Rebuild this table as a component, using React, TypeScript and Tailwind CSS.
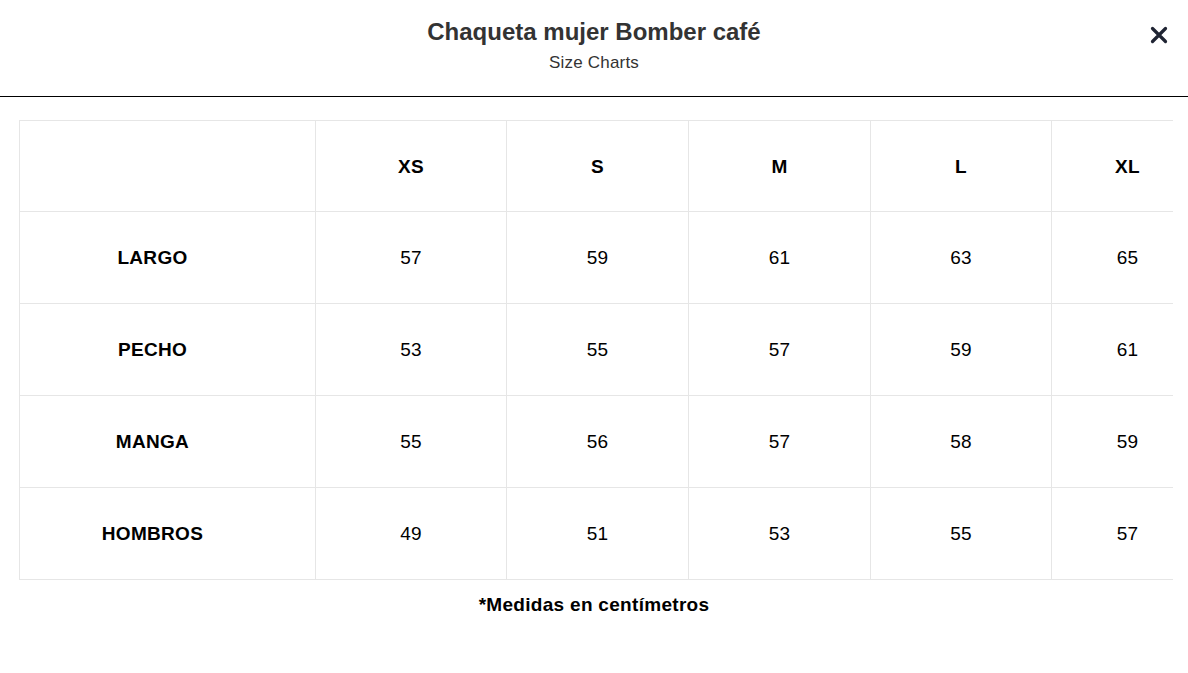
const sizes = ["XS", "S", "M", "L", "XL"]

const rows = [
  { label: "LARGO", values: [57, 59, 61, 63, 65] },
  { label: "PECHO", values: [53, 55, 57, 59, 61] },
  { label: "MANGA", values: [55, 56, 57, 58, 59] },
  { label: "HOMBROS", values: [49, 51, 53, 55, 57] },
]

const colWidths = ["w-[191px]", "w-[182px]", "w-[182px]", "w-[181px]", "w-[152px]"]

export default function App() {
  return (
    <div className="min-h-screen bg-white font-['Liberation_Sans',Arial,sans-serif]">
      {/* Header */}
      <div className="relative h-[97px] border-b border-black flex flex-col items-center pt-[17px]">
        <h1 className="text-[24px] leading-[30px] font-bold text-[#333]">Chaqueta mujer Bomber café</h1>
        <p className="text-[17px] leading-5 text-[#333] mt-[6px] tracking-[0.2px]">Size Charts</p>
        <button className="absolute right-[16px] top-[22px] text-[#1f2433]">
          <svg width="26" height="26" viewBox="0 0 24 24" fill="none" stroke="currentColor" strokeWidth="3" strokeLinecap="round">
            <path d="M6 6l12 12M18 6L6 18" />
          </svg>
        </button>
      </div>

      {/* Table */}
      <div className="ml-[19px] mt-[23px] w-[1154px] overflow-hidden">
        <table className="table-fixed w-[1184px] border-collapse text-[19px] text-black tracking-[0.3px]">
          <thead>
            <tr className="h-[91px]">
              <th className="w-[296px] border border-[#e6e6e6]"></th>
              {sizes.map((s, i) => (
                <th key={s} className={`${colWidths[i]} border border-[#e6e6e6] font-bold pt-[3px]`}>
                  {s}
                </th>
              ))}
            </tr>
          </thead>
          <tbody>
            {rows.map((r) => (
              <tr key={r.label} className="h-[92px]">
                <td className="border border-[#e6e6e6] font-bold text-center pr-[30px] pt-[1px]">{r.label}</td>
                {r.values.map((v, i) => (
                  <td key={i} className="border border-[#e6e6e6] text-center pt-[1px]">
                    {v}
                  </td>
                ))}
              </tr>
            ))}
          </tbody>
        </table>
      </div>

      <p className="text-center text-[19px] font-bold text-black mt-[11px] tracking-[0.3px]">*Medidas en centímetros</p>
    </div>
  )
}
